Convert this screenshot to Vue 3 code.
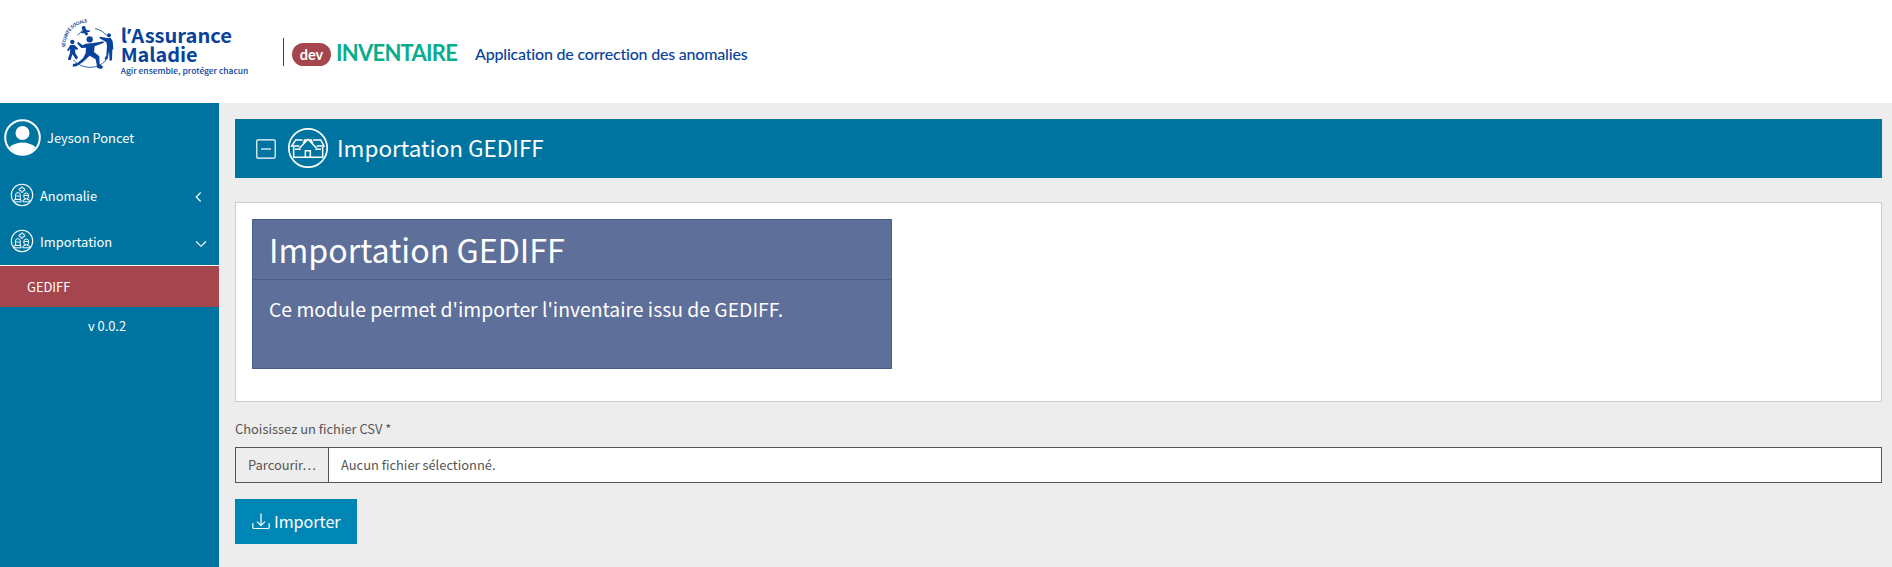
<script setup>
import { ref } from 'vue'

const menu = ref([
  { label: 'Anomalie', open: false },
  { label: 'Importation', open: true },
])
</script>

<template>
  <div class="page">
    <header class="header">
      <svg class="brand" viewBox="0 0 630 225" role="img" aria-label="l'Assurance Maladie">
        <defs><path id="arc" d="M46 113C45 67 75 37 121 36" /></defs>
        <g fill="none" stroke="#08429b" stroke-width="2.500">
          <path d="M83 76C91 65 100 60 108 57M135 56C151 59 162 66 170 77M71 150C88 174 142 184 168 150" />
        </g>
        <text class="arc-text"><textPath href="#arc" textLength="112">SÉCURITÉ SOCIALE</textPath></text>
        <g fill="#08429b">
          <circle cx="119" cy="88" r="9.500" />
          <path d="M107 101L130 99L149 96L159 94L162 98L134 109L132 126L148 139L149 163L160 170L154 177L142 174L137 148L119 137L98 157L79 169L68 170L69 162L82 159L99 145L107 129L108 113L94 114L81 100L85 96L98 106Z" />
          <circle cx="177" cy="76" r="6" />
          <path d="M172 84L182 83L188 94L190 116L187 119L186 150L179 153L177 123L173 147L165 150L164 145L169 137L171 109L169 97L148 84L150 80Z" />
          <circle cx="67" cy="96" r="6.500" />
          <path d="M61 105L73 105L84 115L82 120L75 118L76 130L84 142L79 149L67 133L62 150L55 150L54 146L60 129L61 116L55 124L51 121Z" />
          <circle cx="101" cy="54" r="6" />
          <path d="M97 60L107 57L112 61L119 61L120 65L111 67L115 72L109 77L103 70L94 70L93 65L98 65Z" />
        </g>
        <g class="brand-text">
          <text x="212" y="98" font-size="57" textLength="334" lengthAdjust="spacingAndGlyphs">l<tspan class="quote">’</tspan>Assurance</text>
          <text x="212" y="155" font-size="57" textLength="231" lengthAdjust="spacingAndGlyphs">Maladie</text>
          <text class="motto" x="212" y="191" font-size="22" textLength="383" lengthAdjust="spacingAndGlyphs">Agir ensemble, protéger chacun</text>
        </g>
      </svg>
      <div class="separator"></div>
      <span class="env">dev</span>
      <span class="app-name">INVENTAIRE</span>
      <span class="tagline">Application de correction des anomalies</span>
    </header>

    <div class="body">
      <aside class="sidebar">
        <div class="user">
          <svg width="37" height="37" viewBox="0 0 37 37">
            <circle cx="18.500" cy="18.500" r="17.300" fill="none" stroke="#fff" stroke-width="2" />
            <circle cx="18.500" cy="14" r="7" fill="#fff" />
            <path d="M5.500 28C9 25 14 23.500 18.500 23.500S28 25 31.500 28C28.500 33 23.500 36 18.500 36S8.500 33 5.500 28Z" fill="#fff" />
          </svg>
          <span>Jeyson Poncet</span>
        </div>
        <nav>
          <div v-for="item in menu" :key="item.label" class="item" :class="{ open: item.open }">
            <svg class="people" width="24" height="24" viewBox="0 0 24 24" fill="none" stroke="#fff">
              <circle cx="12" cy="12" r="10.700" stroke-width="1.100" />
              <path d="M11 4h2v1.600h1.800v2H13v1.600h-2V7.600H9.200v-2H11Z" stroke-width=".9" />
              <path d="M5.500 16.500v-4.500a2.400 2.400 0 0 1 4.800 0v4.500ZM6.200 13h3.500M4.200 19v-2.200l2.300-1M11 19v-2l-1.700-1.200M4.200 18.800H11" stroke-width=".95" />
              <ellipse cx="16.200" cy="13" rx="2.500" ry="3" stroke-width=".95" />
              <path d="M14 12.500h4.300M15 15.600v1.200M17.400 15.600v1.200M13 19v-1.800l2-.8M19.800 19v-1.800l-2.300-.8M13 18.800h6.800" stroke-width=".95" />
            </svg>
            <span>{{ item.label }}</span>
            <svg class="chevron" width="12" height="12" viewBox="0 0 12 12" fill="none" stroke="#fff" stroke-width="1.100">
              <path v-if="item.open" d="M1.200 3.500L6 8.300L10.800 3.500" />
              <path v-else d="M8.700 1.500L4.200 6L8.700 10.500" />
            </svg>
          </div>
        </nav>
        <div class="subitem">GEDIFF</div>
        <div class="version">v 0.0.2</div>
      </aside>

      <main class="main">
        <div class="title-bar">
          <svg class="collapse" width="20" height="20" viewBox="0 0 20 20" fill="none" stroke="#fff" stroke-width="1.200">
            <rect x=".8" y=".8" width="18.400" height="18.400" rx="1.200" />
            <path d="M5 10h10" />
          </svg>
          <svg class="house" width="40" height="40" viewBox="0 0 120 120" fill="none" stroke="#fff" stroke-width="4.500">
            <circle cx="60" cy="60" r="57.500" stroke-width="5" />
            <path d="M17 57V88H104V57M44 36H23L11 54H34M75 36H98L108 54H86" />
            <path d="M34 61L60 34L86 61M46 46L50 36H70L74 46" stroke-width="4.500" />
            <path d="M52 88V68H67V88M21 64H38M82 64H99" />
          </svg>
          <h1>Importation GEDIFF</h1>
        </div>

        <section class="card">
          <div class="panel">
            <h2>Importation GEDIFF</h2>
            <p>Ce module permet d'importer l'inventaire issu de GEDIFF.</p>
          </div>
        </section>

        <div class="label">Choisissez un fichier CSV *</div>
        <div class="file">
          <span class="browse">Parcourir…</span>
          <span class="file-name">Aucun fichier sélectionné.</span>
        </div>
        <button class="import" type="button">
          <svg width="18" height="17" viewBox="0 0 18 17" fill="none" stroke="#fff" stroke-width="1.200" stroke-linecap="round" stroke-linejoin="round">
            <path d="M.8 10.500V14.200Q.8 15.500 2.100 15.500H15.900Q17.200 15.500 17.200 14.200V10.500M9 .8V12.500M5.300 8.900L9 12.600L12.700 8.900" />
          </svg>
          <span>Importer</span>
        </button>
      </main>
    </div>
  </div>
</template>

<style>
body {
  background: #ededed;
  overflow: hidden;
}
</style>

<style scoped>
.page {
  height: 567px;
  display: flex;
  flex-direction: column;
  font-family: "Noto Sans CJK SC", "Noto Sans", sans-serif;
  color: #fff;
  white-space: nowrap;
}
.header {
  height: 103px;
  background: #fff;
  display: flex;
  flex: none;
  box-sizing: border-box;
  padding: 10px 0 0 50px;
  font-family: Lato, "Open Sans", sans-serif;
}
.brand {
  width: 210px;
  height: 75px;
}
.brand-text {
  font-family: "Noto Sans CJK SC", sans-serif;
  font-weight: 700;
  fill: #08429b;
}
.quote {
  font-family: "Noto Sans", sans-serif;
}
.motto {
  font-weight: 500;
}
.arc-text {
  font: 700 13px "Noto Sans CJK SC", sans-serif;
  fill: #08429b;
}
.separator {
  width: 1px;
  height: 28px;
  margin: 28px 0 0 23px;
  background: #1747a0;
}
.env {
  width: 39px;
  height: 23px;
  margin: 33px 0 0 8px;
  border-radius: 12px;
  background: #a5454d;
  font-size: 14.5px;
  font-weight: 700;
  line-height: 23px;
  text-align: center;
}
.app-name {
  width: 122px;
  margin: 28px 0 0 5px;
  color: #0aac8e;
  font-size: 22px;
  font-weight: 700;
  letter-spacing: -0.75px;
  line-height: 29px;
}
.tagline {
  margin: 33px 0 0 17px;
  color: #08429b;
  font-size: 16px;
  font-weight: 500;
  letter-spacing: -0.2px;
  line-height: 22px;
}
.body {
  flex: 1;
  display: flex;
}
.sidebar {
  width: 219px;
  flex: none;
  background: #0074a0;
  font-size: 12.9px;
}
.user {
  height: 37px;
  display: flex;
  padding: 16px 0 0 4px;
  line-height: 38px;
}
.user span {
  margin-left: 6px;
}
nav {
  padding-top: 15px;
}
.item {
  height: 46px;
  display: flex;
  align-items: center;
  padding: 0 12px 0 10px;
  line-height: 46px;
}
.item.open {
  height: 48px;
}
.item span {
  margin: 3px 0 0 6px;
}
.people {
  margin-top: 1px;
}
.open .people {
  margin: 0 0 1px;
}
.item.open span {
  margin-top: 2px;
}
.chevron {
  margin: 5px 3px 0 auto;
}
.open .chevron {
  margin: 6px 0 0 auto;
}
.subitem {
  height: 41px;
  border-top: 1px solid #fff;
  padding-left: 27px;
  background: #a5454d;
  line-height: 42px;
}
.version {
  padding-right: 5px;
  text-align: center;
  line-height: 38px;
}
.main {
  flex: 1;
  padding: 16px 10px 0 16px;
  background: #ededed;
}
.title-bar {
  height: 59px;
  display: flex;
  align-items: center;
  padding-left: 21px;
  background: #0074a0;
}
.house {
  margin: 0 0 1px 12px;
}
h1 {
  margin: 0 0 3px 9px;
  font-size: 22.5px;
  font-weight: 400;
  line-height: 40px;
}
.card {
  height: 200px;
  box-sizing: border-box;
  margin-top: 24px;
  padding: 16px;
  border: 1px solid #ccc;
  background: #fff;
}
.panel {
  width: 640px;
  height: 150px;
  box-sizing: border-box;
  border: 1px solid #4c5c88;
  background: #5e6f99;
}
h2 {
  height: 59px;
  margin: 0;
  padding-left: 16px;
  border-bottom: 1px solid #4c5c88;
  font-size: 32.2px;
  font-weight: 400;
  line-height: 58px;
}
p {
  margin: 14px 0 0 16px;
  font-size: 19.35px;
  line-height: 30px;
}
.label {
  margin-top: 16px;
  color: #555;
  font-size: 12.9px;
  line-height: 21px;
}
.file {
  height: 36px;
  box-sizing: border-box;
  display: flex;
  margin-top: 8px;
  border: 1px solid #555;
  background: #fff;
  color: #555;
  font-size: 12.9px;
  line-height: 34px;
}
.browse {
  width: 93px;
  box-sizing: border-box;
  padding-left: 12px;
  border-right: 1px solid #555;
  background: #ededed;
}
.file-name {
  margin-left: 12px;
}
.import {
  width: 122px;
  height: 45px;
  display: flex;
  align-items: center;
  margin-top: 16px;
  padding: 0 0 0 17px;
  border: 0;
  background: #0086b5;
  color: #fff;
  font: 400 16.1px/45px "Noto Sans CJK SC", sans-serif;
}
.import svg {
  flex: none;
  margin-right: 4px;
}
</style>
